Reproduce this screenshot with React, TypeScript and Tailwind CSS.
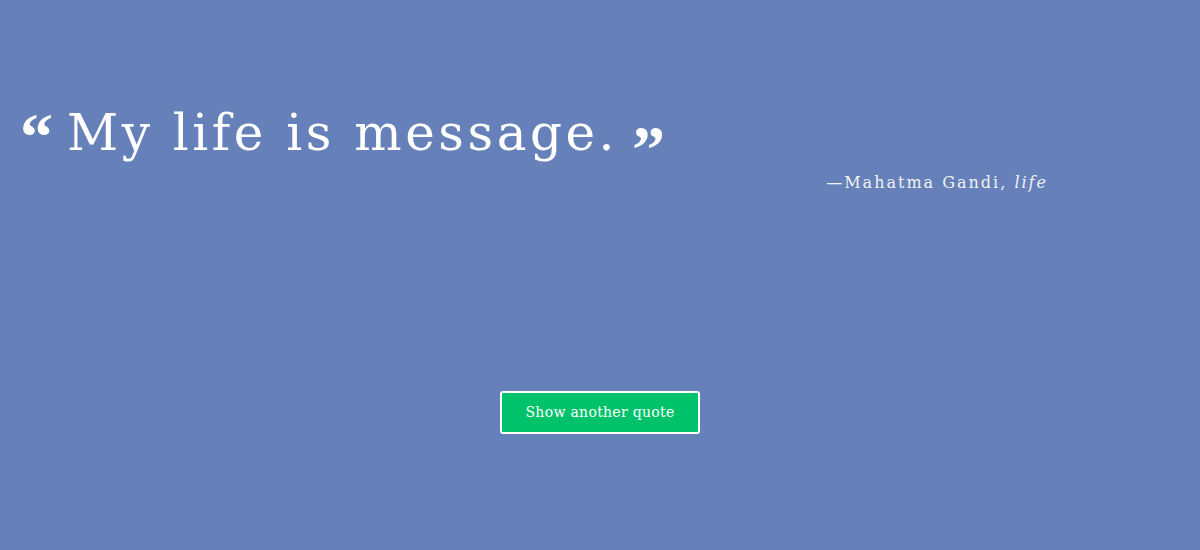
export default function App() {
  const serif = { fontFamily: '"DejaVu Serif", "Liberation Serif", serif' };
  const quoteFont = { fontFamily: '"Liberation Serif", serif' };
  return (
    <div className="w-[1200px] h-[550px] bg-[#6680b9] text-white overflow-hidden" style={serif}>
      <div className="pt-[88px] pl-[20px] flex items-start">
        <span className="text-[66px] leading-none font-bold mt-[16px] mr-[14px]" style={quoteFont}>“</span>
        <span className="text-[50px] leading-[90px] tracking-[3.5px]">My life is message.</span>
        <span className="text-[66px] leading-none font-bold mt-[28px] ml-[14px]" style={quoteFont}>”</span>
      </div>
      <div className="flex justify-end pr-[152px] -mt-[11px]">
        <span className="text-[16px] tracking-[2px] text-[#f2f2f2]">
          —Mahatma Gandi, <i>life</i>
        </span>
      </div>
      <div className="flex justify-center mt-[196px]">
        <button className="w-[200px] h-[43px] bg-[#00c26a] border-2 border-white rounded-[3px] text-[14px] tracking-[0.3px] text-white">
          Show another quote
        </button>
      </div>
    </div>
  );
}
